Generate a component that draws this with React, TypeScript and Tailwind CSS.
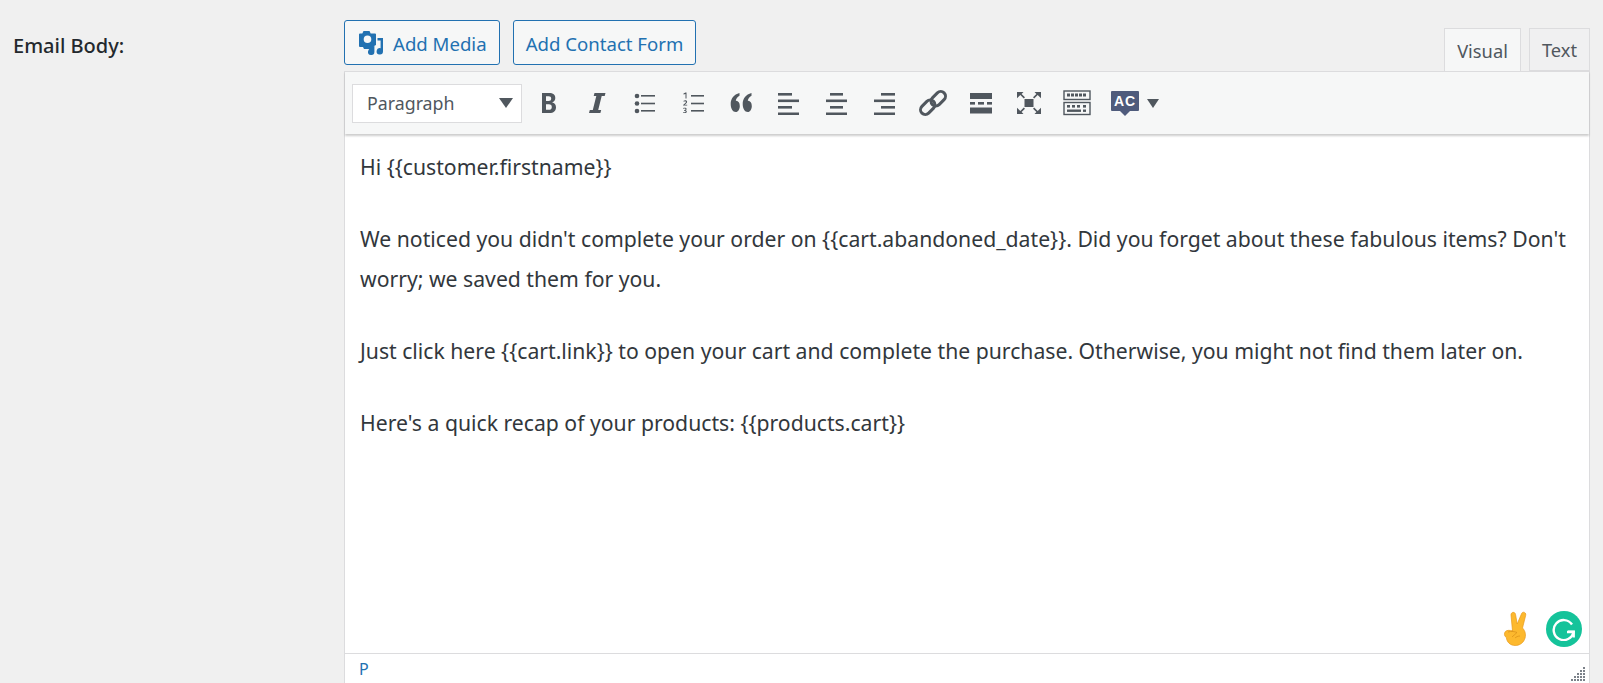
import React from "react";

const ink = "#50575e";

function Bold() {
  return (
    <svg width="20" height="24" viewBox="0 0 20 24" fill="none">
      <path fillRule="evenodd" clipRule="evenodd" fill={ink} d="M3 2h7c4.200 0 6.300 1.800 6.300 5 0 2.300-1.200 3.900-3.200 4.400 2.500.4 3.900 2.200 3.900 4.800 0 3.700-2.400 5.800-6.500 5.800H3V2zm4 3.200v4.900h2.600c1.700 0 2.600-.8 2.600-2.500 0-1.600-.9-2.400-2.600-2.400H7zm0 8v5.500h3c1.900 0 2.800-.9 2.800-2.800 0-1.800-1-2.700-2.900-2.700H7z" />
    </svg>
  );
}

function Italic() {
  return (
    <svg width="20" height="24" viewBox="0 0 20 24" fill={ink}>
      <path d="M7.500 2h11l-.8 3h-3l-3.500 14h3l-.8 3H2l.8-3h3L9.300 5H6.700z" />
    </svg>
  );
}

function BulletList() {
  return (
    <svg width="22" height="24" viewBox="0 0 22 24" fill={ink}>
      <circle cx="3" cy="5" r="2.300" />
      <circle cx="3" cy="12.500" r="2.300" />
      <circle cx="3" cy="20" r="2.300" />
      <rect x="7" y="4" width="14" height="1.600" />
      <rect x="7" y="11.700" width="14" height="1.600" />
      <rect x="7" y="19" width="14" height="1.600" />
    </svg>
  );
}

function NumberList() {
  return (
    <svg width="22" height="24" viewBox="0 0 22 24" fill={ink}>
      <rect x="9" y="4" width="13" height="1.600" />
      <rect x="9" y="11.700" width="13" height="1.600" />
      <rect x="9" y="19" width="13" height="1.600" />
      <path d="M1.500 2.500 3.500 1.500h1v6h-1V3L1.500 3.600zM1 14.500c0-.4.200-.7.600-1.100l1.700-1.500c.5-.4.600-.7.600-1 0-.4-.3-.6-.8-.6-.5 0-1 .2-1.500.5V9.700c.5-.2 1.100-.4 1.700-.4 1.100 0 1.800.6 1.800 1.500 0 .7-.3 1.100-1 1.700l-1.300 1.200h2.400v.9H1zM1.200 17c.5-.2 1-.3 1.600-.3 1.100 0 1.800.5 1.800 1.300 0 .6-.3 1-.9 1.200.7.200 1.100.6 1.100 1.300 0 1-.8 1.600-2 1.600-.6 0-1.200-.1-1.700-.3v-.9c.5.200 1 .4 1.600.4.600 0 1-.3 1-.8s-.4-.8-1.200-.8H2v-.8h.5c.7 0 1.100-.3 1.100-.7 0-.4-.3-.6-.9-.6-.5 0-1 .1-1.500.4z" />
    </svg>
  );
}

function Quote() {
  return (
    <svg width="24" height="24" viewBox="0 0 24 24" fill={ink}>
      <path d="M10.500 2v2.800C8.300 6.200 7.100 7.800 6.800 9.800c2.300-.3 4 1.900 4 5.200 0 3.300-1.700 6-4 6-3 0-5.100-3.400-5.100-8 0-5.300 3.200-9.600 8.800-11zM22.500 2v2.800c-2.200 1.400-3.400 3-3.700 5 2.300-.3 4 1.900 4 5.200 0 3.300-1.700 6-4 6-3 0-5.100-3.400-5.100-8 0-5.300 3.200-9.600 8.800-11z" />
    </svg>
  );
}

function AlignIcon({ rows }: { rows: [number, number][] }) {
  return (
    <svg width="22" height="24" viewBox="0 0 22 24" fill={ink}>
      {rows.map(([x, w], i) => (
        <rect key={i} x={x} y={2 + i * 6.500} width={w} height="2.600" />
      ))}
    </svg>
  );
}

function LinkIcon() {
  return (
    <svg width="28" height="28" viewBox="0 0 28 28" fill="none" stroke={ink} strokeWidth="3">
      <rect x="14.500" y="1.500" width="9.500" height="16.500" rx="4.750" transform="rotate(45 19.250 9.750)" />
      <rect x="4" y="10" width="9.500" height="16.500" rx="4.750" transform="rotate(45 8.750 18.250)" />
    </svg>
  );
}

function ReadMore() {
  return (
    <svg width="22" height="24" viewBox="0 0 22 24" fill={ink}>
      <rect x="0" y="2" width="22" height="6" />
      <rect x="0" y="11" width="5" height="2.600" />
      <rect x="8" y="11" width="6" height="2.600" />
      <rect x="17" y="11" width="5" height="2.600" />
      <rect x="0" y="16.500" width="22" height="6" />
    </svg>
  );
}

function Fullscreen() {
  return (
    <svg width="26" height="26" viewBox="0 0 26 26" fill={ink}>
      <rect x="8.500" y="9" width="9" height="8" />
      <path d="M1 2h6.500L5.600 3.900 9 7.300 7.800 8.500 4.300 5.100 1 8.200zM25 2h-6.500l1.900 1.900L17 7.300l1.200 1.200 3.500-3.400L25 8.200zM1 24h6.500l-1.900-1.900L9 18.700l-1.200-1.200-3.500 3.400L1 17.800zM25 24h-6.500l1.900-1.900-3.400-3.400 1.200-1.200 3.500 3.400 3.300-3.100z" />
    </svg>
  );
}

function Kitchen() {
  return (
    <svg width="28" height="26" viewBox="0 0 28 26" fill="none">
      <rect x="1" y="1" width="26" height="8.500" stroke={ink} strokeWidth="1.400" />
      <rect x="1" y="12.500" width="26" height="12" stroke={ink} strokeWidth="1.400" />
      <g fill={ink}>
        {[4, 8, 12, 16, 20].map((x) => (
          <rect key={x} x={x} y="3.500" width="3" height="3" />
        ))}
        <rect x="4" y="15" width="3" height="2.600" />
        <rect x="9" y="15" width="3" height="2.600" />
        <rect x="14" y="15" width="3" height="2.600" />
        <rect x="20" y="15" width="3" height="2.600" />
        <rect x="4" y="19.500" width="14" height="2.400" />
        <rect x="20" y="19.500" width="3" height="2.400" />
      </g>
    </svg>
  );
}

function SpellCheck() {
  return (
    <div className="flex flex-col items-center pt-[1px]">
      <div className="flex h-[20px] w-[28px] items-center justify-center rounded-[1px] bg-[#4f5b7c] font-['Liberation_Sans',sans-serif] text-[14px] leading-none font-bold tracking-[1px] text-white">
        AC
      </div>
      <svg width="10" height="5" viewBox="0 0 10 5" className="block">
        <path d="M0 0h10L5 5z" fill="#4f5b7c" />
      </svg>
    </div>
  );
}

function MediaIcon() {
  return (
    <svg width="26" height="26" viewBox="0 0 26 26" fill="#2271b1">
      <path fillRule="evenodd" d="M5.500 1h6l1.200 2.500H17a1 1 0 0 1 1 1V15l-3 1.500V19H6l-1-2H2a1 1 0 0 1-1-1V4.500a1 1 0 0 1 1-1h2.300zM9.500 5.500a3.800 3.800 0 1 0 0 7.600 3.800 3.800 0 0 0 0-7.600z" />
      <path d="M19.500 8h5.500v13.300a3.200 3.200 0 1 1-2.400-3.100V10.500h-3.100z" />
      <path d="M14 16.500l2.400-.7v6a3.200 3.200 0 1 1-2.400-3.100z" />
    </svg>
  );
}

function Peace() {
  return (
    <svg width="26" height="36" viewBox="0 0 26 36" fill="#fdb92e" stroke="#e79a1d" strokeWidth="0.700">
      <path d="M9.500 20 8 4c-.2-3 3.800-3.700 4.500-.7l1.700 9.700L18.500 2.800c1-2.900 5-1.500 4.200 1.500L19.500 17c3 3 3.800 7.500 2 11.500-1.800 4-5.500 6-9.300 6-5 0-8.500-3.500-8.800-8-2.300-1-2.500-4.500-1-6 1.300-1.200 4-1.700 7.600-.5z" />
      <path d="M5 21c3-1 7-.5 9 .5-2 1.500-3 3-5 4.500M12 27c1-1 3-2 5-2" fill="none" stroke="#d98f17" />
    </svg>
  );
}

function Grammarly() {
  return (
    <div className="flex h-9 w-9 items-center justify-center rounded-full bg-[#15c39a]">
      <svg width="24" height="24" viewBox="0 0 24 24" fill="none" stroke="#fff" strokeWidth="2.400">
        <path d="M20 7.500A10 10 0 1 0 21.500 15H15" />
        <path d="M21.700 20.500V14.800H16" />
      </svg>
    </div>
  );
}

function Grip() {
  const dots = [
    [12, 0], [9, 3], [12, 3], [6, 6], [9, 6], [12, 6], [3, 9], [6, 9], [9, 9], [12, 9], [0, 12], [3, 12], [6, 12], [9, 12], [12, 12],
  ];
  return (
    <svg width="14" height="14" viewBox="0 0 14 14" fill="#7b8189">
      {dots.map(([x, y]) => (
        <rect key={`${x}-${y}`} x={x} y={y} width="2" height="2" />
      ))}
    </svg>
  );
}

const toolbarIcons = [
  <Bold />,
  <Italic />,
  <BulletList />,
  <NumberList />,
  <Quote />,
  <AlignIcon rows={[[0, 14], [0, 21], [0, 14], [0, 21]]} />,
  <AlignIcon rows={[[4, 13], [0, 21], [4, 13], [0, 21]]} />,
  <AlignIcon rows={[[7, 14], [0, 21], [7, 14], [0, 21]]} />,
  <LinkIcon />,
  <ReadMore />,
  <Fullscreen />,
  <Kitchen />,
];

export default function App() {
  return (
    <div className="flex h-[683px] w-[1603px] overflow-hidden bg-[#f0f0f0] font-['Noto_Sans',sans-serif] text-[#32373c]">
      <div className="w-[344px] pt-[33px] pl-[13px] text-[20px] leading-[26px] font-medium text-[#23282d]">Email Body:</div>

      <div className="flex w-[1246px] flex-col">
        <div className="flex h-[71px] items-end justify-between pt-[20px]">
          <div className="flex gap-[13px] self-start">
            <button className="flex h-[45px] w-[156px] items-center gap-[9px] rounded-[3px] border border-[#2271b1] bg-[#f6f7f7] pt-[2px] pl-[13px] text-[18.6px] text-[#2271b1]">
              <span className="-mt-[2px]">
                <MediaIcon />
              </span>
              Add Media
            </button>
            <button className="flex h-[45px] w-[183px] items-center justify-center rounded-[3px] border border-[#2271b1] bg-[#f6f7f7] pt-[2px] text-[18.6px] text-[#2271b1]">
              Add Contact Form
            </button>
          </div>
          <div className="flex gap-[8px]">
            <div className="relative z-10 -mb-px flex h-[44px] w-[77px] items-center justify-center border border-b-0 border-[#dcdcde] bg-[#f6f7f7] pt-[1px] text-[18.3px] text-[#50575e]">Visual</div>
            <div className="flex h-[43px] w-[61px] items-center justify-center border border-[#dcdcde] bg-[#f0f0f1] pt-[1px] text-[18.3px] text-[#50575e]">Text</div>
          </div>
        </div>

        <div className="flex min-h-0 flex-1 flex-col border-x border-[#dcdcde] bg-white">
          <div className="z-10 flex h-[63px] items-center border-t border-[#dcdcde] bg-[#f6f7f7] pl-[7px] shadow-[0_2px_2px_rgba(0,0,0,0.2)]">
            <div className="flex h-[39px] w-[170px] items-center justify-between border border-[#dcdcde] bg-white pr-[8px] pl-[14px] text-[17.8px] text-[#50575e]">
              Paragraph
              <svg width="14" height="10" viewBox="0 0 14 10">
                <path d="M0 0h14L7 10z" fill={ink} />
              </svg>
            </div>
            <div className="ml-[3px] flex items-center">
              {toolbarIcons.map((icon, i) => (
                <div key={i} className="flex h-[39px] w-[48px] items-center justify-center">
                  {icon}
                </div>
              ))}
              <div className="ml-[10px] flex items-center gap-[8px]">
                <SpellCheck />
                <svg width="12" height="9" viewBox="0 0 12 9">
                  <path d="M0 0h12L6 9z" fill={ink} />
                </svg>
              </div>
            </div>
          </div>

          <div className="relative flex-1 px-[15px] pt-[13px] text-[21.2px] leading-[40px] text-[#32373c]">
            <p>{"Hi {{customer.firstname}}"}</p>
            <p className="mt-[32px]">
              {"We noticed you didn't complete your order on {{cart.abandoned_date}}. Did you forget about these fabulous items? Don't worry; we saved them for you."}
            </p>
            <p className="mt-[32px]">
              {"Just click here {{cart.link}} to open your cart and complete the purchase. Otherwise, you might not find them later on."}
            </p>
            <p className="mt-[32px]">{"Here's a quick recap of your products: {{products.cart}}"}</p>
            <div className="absolute right-[7px] bottom-[6px] flex items-center gap-[17px]">
              <Peace />
              <Grammarly />
            </div>
          </div>

          <div className="relative flex h-[30px] items-center border-t border-[#dcdcde] pt-[1px] pl-[14px] text-[16px] text-[#2271b1]">
            P
            <div className="absolute right-[4px] bottom-[2px]">
              <Grip />
            </div>
          </div>
        </div>
      </div>
    </div>
  );
}
